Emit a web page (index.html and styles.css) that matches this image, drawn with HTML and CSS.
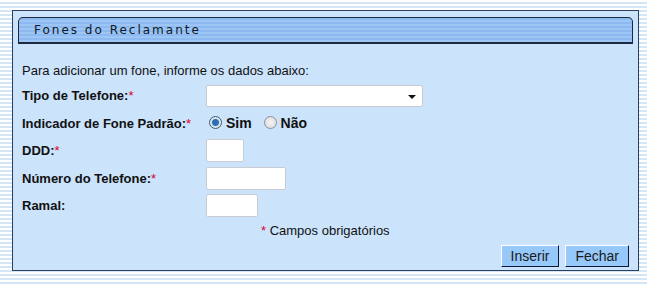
FILE: index.html
```html
<!doctype html>
<html>
  <head>
    <meta charset="utf-8">
    <title>Fones do Reclamante</title>
    <link rel="stylesheet" href="styles.css">
  </head>
  <body>
    <div class="panel">
      <div class="titlebar">Fones do Reclamante</div>
      <p class="intro">Para adicionar um fone, informe os dados abaixo:</p>
      <table class="form">
        <tr>
          <td class="label">Tipo de Telefone:<span class="req">*</span></td>
          <td>
            <div class="select"><span class="arrow"></span></div>
          </td>
        </tr>
        <tr>
          <td class="label">Indicador de Fone Padrão:<span class="req">*</span></td>
          <td class="radios">
            <span class="radio on"></span><b>Sim</b>
            <span class="radio"></span><b>Não</b>
          </td>
        </tr>
        <tr>
          <td class="label">DDD:<span class="req">*</span></td>
          <td><input type="text" class="field ddd"></td>
        </tr>
        <tr>
          <td class="label">Número do Telefone:<span class="req">*</span></td>
          <td><input type="text" class="field fone"></td>
        </tr>
        <tr>
          <td class="label">Ramal:</td>
          <td><input type="text" class="field ramal"></td>
        </tr>
      </table>
      <p class="note"><span class="req">*</span> Campos obrigatórios</p>
      <div class="buttons">
        <input type="button" class="btn" value="Inserir">
        <input type="button" class="btn" value="Fechar">
      </div>
    </div>
  </body>
</html>
```

FILE: styles.css
```css
body {
  margin: 0;
  padding: 10px 9px 0 12px;
  height: 284px;
  box-sizing: border-box;
  background: repeating-linear-gradient(to bottom, #ffffff 0, #ffffff 2px, #d4e5f7 2px, #d4e5f7 4px);
  font-family: "Liberation Sans", Arial, sans-serif;
  font-size: 13px;
  color: #111;
}

.panel {
  width: 627px;
  height: 261px;
  border: 1px solid #2c405c;
  background: #cbe3fb;
  padding: 6px 0 0 5px;
  box-sizing: border-box;
  position: relative;
}

.titlebar {
  width: 615px;
  height: 27px;
  box-sizing: border-box;
  border: 1px solid #1a2a40;
  border-bottom-width: 2px;
  border-radius: 5px 5px 0 0;
  background:
    repeating-linear-gradient(to bottom, #8cbaf0 0, #8cbaf0 2px, #9dc6f4 2px, #9dc6f4 4px);
  font-family: "DejaVu Sans", Verdana, sans-serif;
  font-size: 12px;
  letter-spacing: 2px;
  color: #101828;
  padding: 5px 0 0 15px;
}

.intro {
  margin: 19px 0 0 4px;
}

.form {
  border-collapse: collapse;
  margin: 4px 0 0 4px;
}

.form td {
  padding: 0;
  height: 27.5px;
  vertical-align: middle;
}

.label {
  font-weight: bold;
  width: 184px;
}

.req {
  color: #e0002a;
  font-weight: normal;
}

.select {
  width: 217px;
  height: 22px;
  box-sizing: border-box;
  background: #fff;
  border: 1px solid #c8ccd2;
  border-radius: 2px;
  position: relative;
}

.arrow {
  position: absolute;
  right: 6px;
  top: 9px;
  border-left: 4px solid transparent;
  border-right: 4px solid transparent;
  border-top: 4px solid #111;
}

.radios {
  font-size: 14px;
}

.radios b {
  margin: 0 5px 0 4px;
}

.radio {
  display: inline-block;
  width: 11px;
  height: 11px;
  border: 1px solid #8a9098;
  border-radius: 50%;
  background: radial-gradient(circle, #f4f4f4 0, #d8d8d8 100%);
  vertical-align: -1px;
  margin-left: 3px;
}

.radio.on {
  background: radial-gradient(circle, #2c6fb0 0, #2c6fb0 3px, #cfe4f4 4px, #eaeaea 100%);
  border-color: #4a5a6a;
}

.field {
  display: block;
  height: 23px;
  box-sizing: border-box;
  border: 1px solid #c8ccd2;
  border-radius: 2px;
  background: #fff;
  margin: 0;
  padding: 0;
}

.ddd { width: 38px; }
.fone { width: 80px; }
.ramal { width: 52px; }

.note {
  margin: 3px 0 0 243px;
}

.buttons {
  position: absolute;
  right: 9px;
  bottom: 3px;
  display: flex;
  gap: 6px;
}

.btn {
  height: 22px;
  padding: 0 9px;
  font-family: "Liberation Sans", Arial, sans-serif;
  font-size: 14px;
  color: #1a1a1a;
  background: #97c8fa;
  border: 1px solid;
  border-color: #ffffff #0c1838 #0c1838 #ffffff;
  border-radius: 0;
}
```
